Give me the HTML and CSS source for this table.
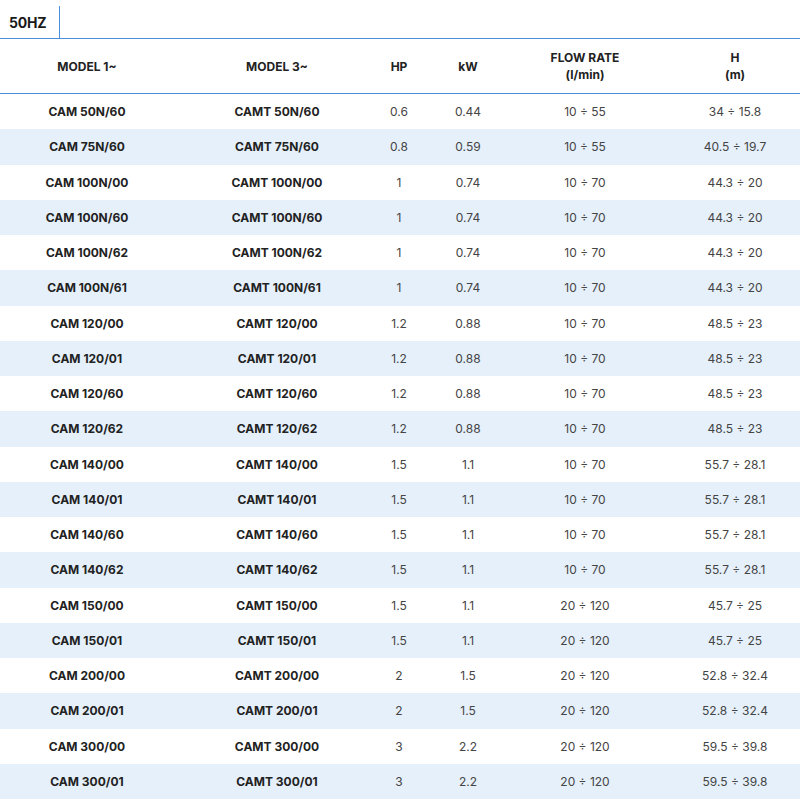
FILE: index.html
```html
<!DOCTYPE html>
<html>
<head>
<meta charset="utf-8">
<link rel="stylesheet" href="styles.css">
</head>
<body>
<div class="tabs">
  <div class="tab">50HZ</div>
</div>
<table class="spec">
  <colgroup>
    <col class="c1"><col class="c2"><col class="c3"><col class="c4"><col class="c5"><col class="c6">
  </colgroup>
  <thead>
    <tr><th>MODEL 1~</th><th>MODEL 3~</th><th class="hp">HP</th><th>kW</th><th>FLOW RATE<br>(l/min)</th><th>H<br>(m)</th></tr>
  </thead>
  <tbody>
    <tr><td class="m">CAM 50N/60</td><td class="m">CAMT 50N/60</td><td class="hp">0.6</td><td>0.44</td><td>10 ÷ 55</td><td>34 ÷ 15.8</td></tr>
    <tr><td class="m">CAM 75N/60</td><td class="m">CAMT 75N/60</td><td class="hp">0.8</td><td>0.59</td><td>10 ÷ 55</td><td>40.5 ÷ 19.7</td></tr>
    <tr><td class="m">CAM 100N/00</td><td class="m">CAMT 100N/00</td><td class="hp">1</td><td>0.74</td><td>10 ÷ 70</td><td>44.3 ÷ 20</td></tr>
    <tr><td class="m">CAM 100N/60</td><td class="m">CAMT 100N/60</td><td class="hp">1</td><td>0.74</td><td>10 ÷ 70</td><td>44.3 ÷ 20</td></tr>
    <tr><td class="m">CAM 100N/62</td><td class="m">CAMT 100N/62</td><td class="hp">1</td><td>0.74</td><td>10 ÷ 70</td><td>44.3 ÷ 20</td></tr>
    <tr><td class="m">CAM 100N/61</td><td class="m">CAMT 100N/61</td><td class="hp">1</td><td>0.74</td><td>10 ÷ 70</td><td>44.3 ÷ 20</td></tr>
    <tr><td class="m">CAM 120/00</td><td class="m">CAMT 120/00</td><td class="hp">1.2</td><td>0.88</td><td>10 ÷ 70</td><td>48.5 ÷ 23</td></tr>
    <tr><td class="m">CAM 120/01</td><td class="m">CAMT 120/01</td><td class="hp">1.2</td><td>0.88</td><td>10 ÷ 70</td><td>48.5 ÷ 23</td></tr>
    <tr><td class="m">CAM 120/60</td><td class="m">CAMT 120/60</td><td class="hp">1.2</td><td>0.88</td><td>10 ÷ 70</td><td>48.5 ÷ 23</td></tr>
    <tr><td class="m">CAM 120/62</td><td class="m">CAMT 120/62</td><td class="hp">1.2</td><td>0.88</td><td>10 ÷ 70</td><td>48.5 ÷ 23</td></tr>
    <tr><td class="m">CAM 140/00</td><td class="m">CAMT 140/00</td><td class="hp">1.5</td><td>1.1</td><td>10 ÷ 70</td><td>55.7 ÷ 28.1</td></tr>
    <tr><td class="m">CAM 140/01</td><td class="m">CAMT 140/01</td><td class="hp">1.5</td><td>1.1</td><td>10 ÷ 70</td><td>55.7 ÷ 28.1</td></tr>
    <tr><td class="m">CAM 140/60</td><td class="m">CAMT 140/60</td><td class="hp">1.5</td><td>1.1</td><td>10 ÷ 70</td><td>55.7 ÷ 28.1</td></tr>
    <tr><td class="m">CAM 140/62</td><td class="m">CAMT 140/62</td><td class="hp">1.5</td><td>1.1</td><td>10 ÷ 70</td><td>55.7 ÷ 28.1</td></tr>
    <tr><td class="m">CAM 150/00</td><td class="m">CAMT 150/00</td><td class="hp">1.5</td><td>1.1</td><td>20 ÷ 120</td><td>45.7 ÷ 25</td></tr>
    <tr><td class="m">CAM 150/01</td><td class="m">CAMT 150/01</td><td class="hp">1.5</td><td>1.1</td><td>20 ÷ 120</td><td>45.7 ÷ 25</td></tr>
    <tr><td class="m">CAM 200/00</td><td class="m">CAMT 200/00</td><td class="hp">2</td><td>1.5</td><td>20 ÷ 120</td><td>52.8 ÷ 32.4</td></tr>
    <tr><td class="m">CAM 200/01</td><td class="m">CAMT 200/01</td><td class="hp">2</td><td>1.5</td><td>20 ÷ 120</td><td>52.8 ÷ 32.4</td></tr>
    <tr><td class="m">CAM 300/00</td><td class="m">CAMT 300/00</td><td class="hp">3</td><td>2.2</td><td>20 ÷ 120</td><td>59.5 ÷ 39.8</td></tr>
    <tr><td class="m">CAM 300/01</td><td class="m">CAMT 300/01</td><td class="hp">3</td><td>2.2</td><td>20 ÷ 120</td><td>59.5 ÷ 39.8</td></tr>
  </tbody>
</table>
</body>
</html>
```
FILE: styles.css
```css
html, body {
  margin: 0;
  padding: 0;
  background: #fff;
  font-family: Inter, "Liberation Sans", sans-serif;
  color: #222;
  overflow: hidden;
}
.tabs {
  display: flex;
  height: 39px;
  border-bottom: 1.5px solid #4a8fdb;
  box-sizing: border-box;
  padding-top: 6px;
}
.tab {
  width: 60px;
  box-sizing: border-box;
  border-right: 1.5px solid #4a8fdb;
  padding-left: 9px;
  font-size: 14px;
  font-weight: 700;
  color: #1a1a1a;
  display: flex;
  align-items: center;
  letter-spacing: -0.2px;
}
.spec {
  width: 100%;
  border-collapse: collapse;
  table-layout: fixed;
}
.c1 { width: 174px; }
.c2 { width: 206px; }
.c3 { width: 56px; }
.c4 { width: 64px; }
.c5 { width: 170px; }
.c6 { width: 130px; }
.spec th {
  height: 54px;
  padding: 0;
  font-size: 12px;
  font-weight: 700;
  line-height: 17px;
  color: #222;
  text-align: center;
  border-bottom: 1.5px solid #4a8fdb;
  vertical-align: middle;
}
.spec td {
  height: 35.25px;
  padding: 0;
  text-align: center;
  font-size: 12px;
  color: #444;
  vertical-align: middle;
}
.spec td.m {
  font-weight: 700;
  color: #222;
}
.spec .hp {
  padding-right: 18px;
}
.spec tbody tr:nth-child(even) {
  background: #e5f0fb;
}
```
